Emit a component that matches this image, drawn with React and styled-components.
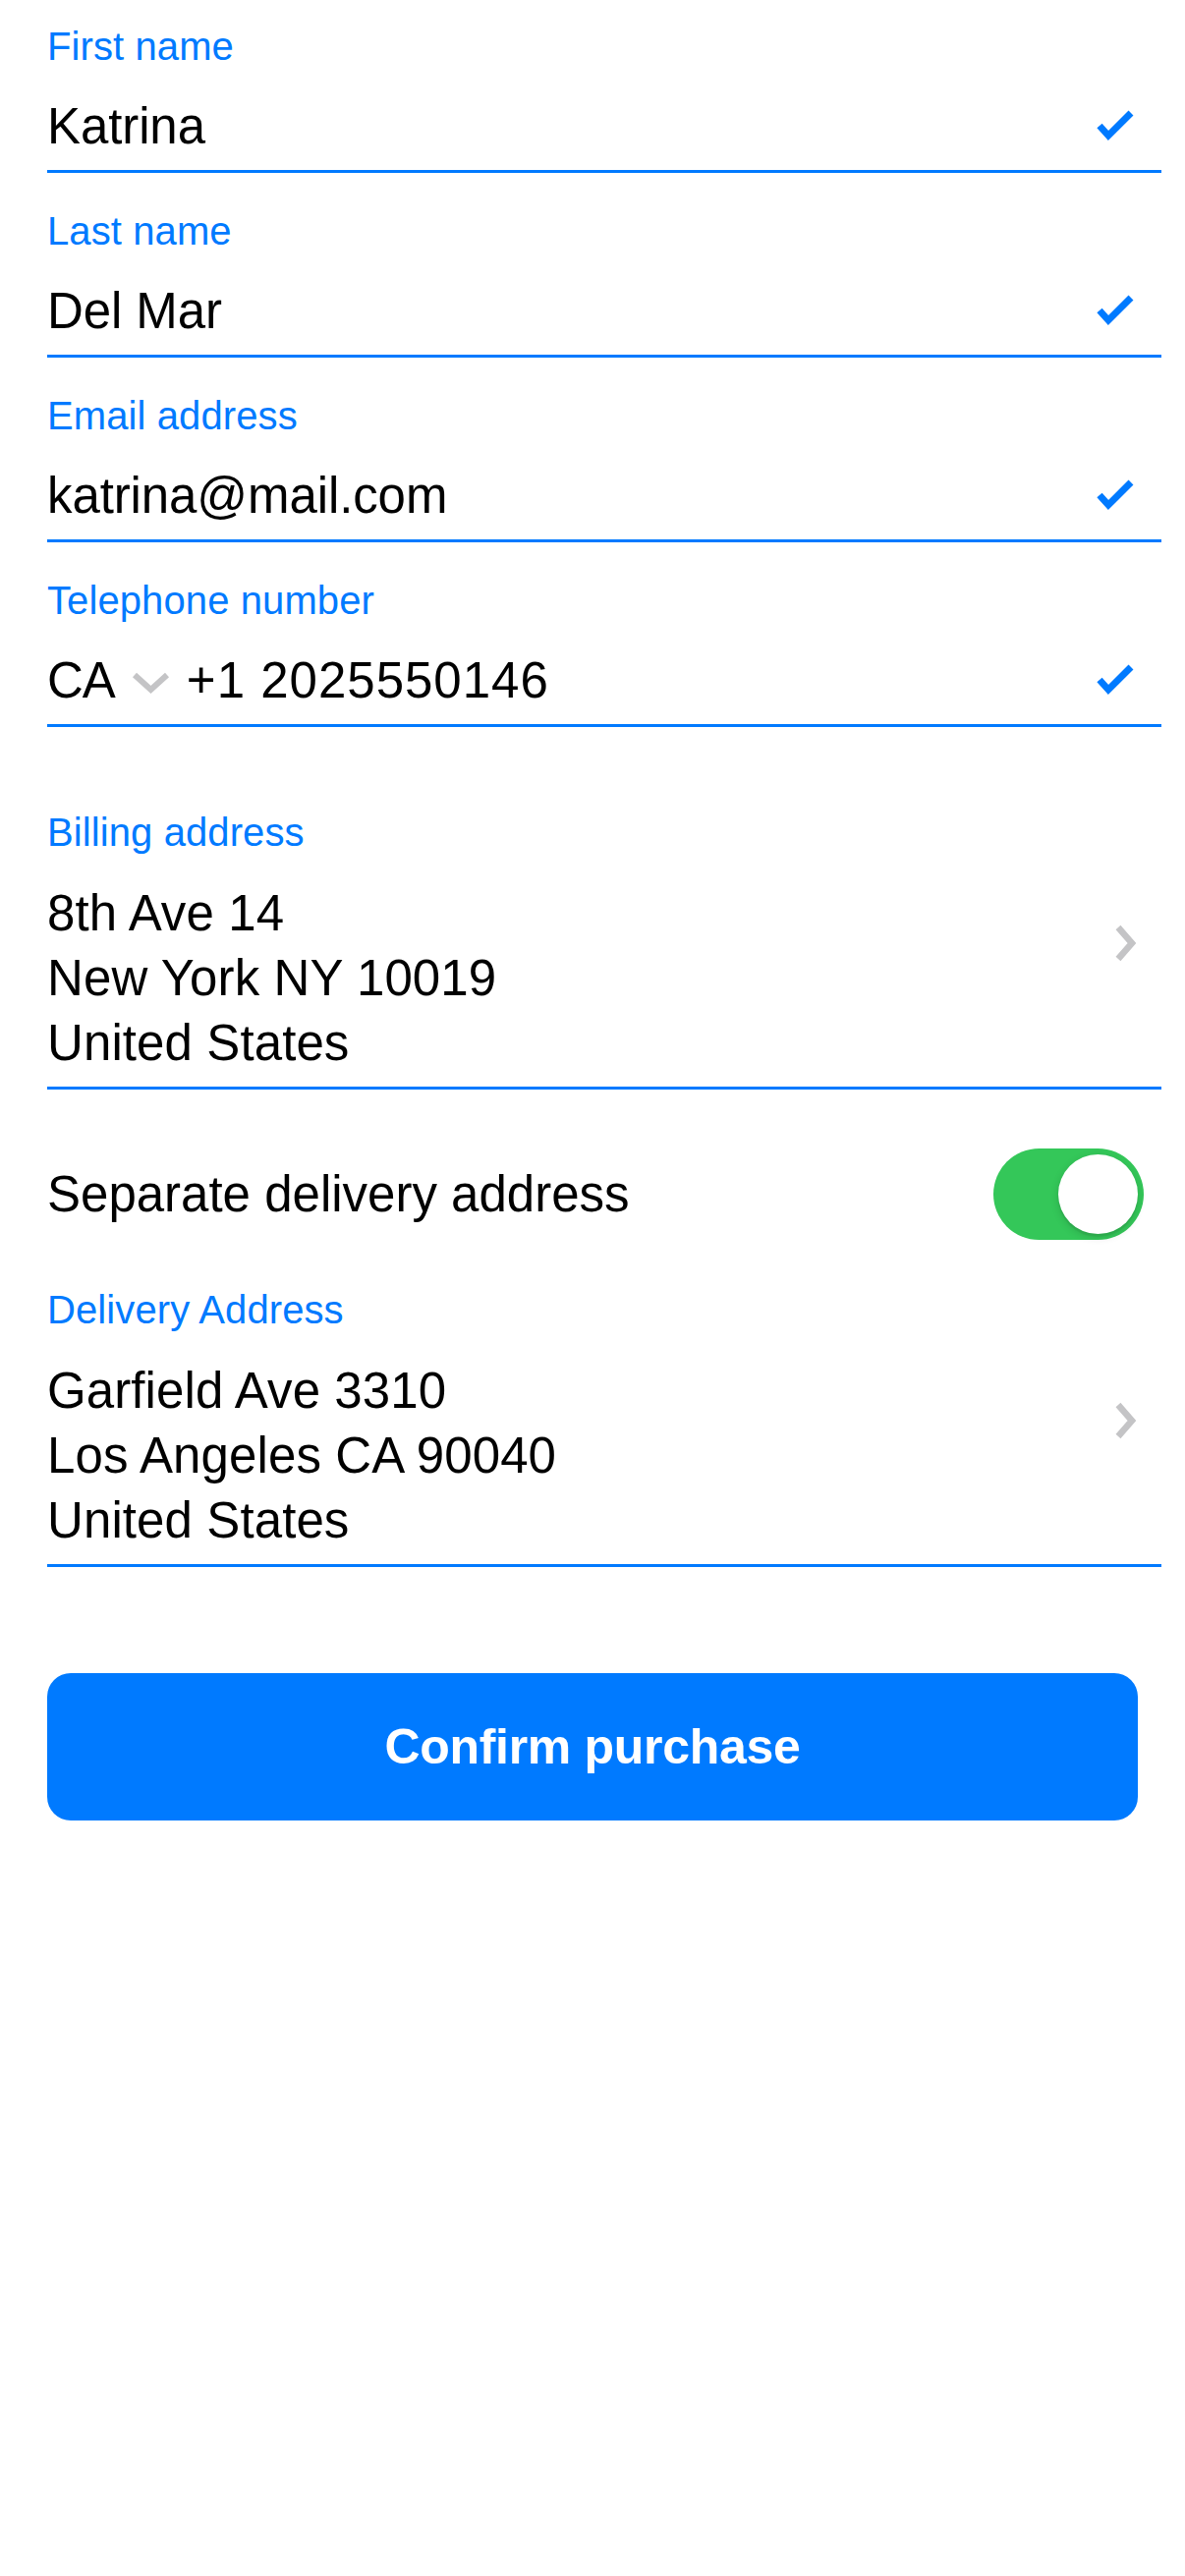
import React from "react";
import styled, { createGlobalStyle } from "styled-components";

const GlobalStyle = createGlobalStyle`
  body {
    margin: 0;
    background: #ffffff;
    font-family: "Liberation Sans", Arial, sans-serif;
    color: #000000;
  }
`;

const Page = styled.div`
  padding: 0 24px 200px 48px;
  background: #ffffff;
`;

const Field = styled.div`
  padding-top: ${(p) => p.$top}px;
  border-bottom: 3px solid #007aff;
`;

const Label = styled.div`
  font-size: 40px;
  line-height: 46px;
  letter-spacing: 0.1px;
  color: #007aff;
`;

const ValueRow = styled.div`
  display: flex;
  align-items: center;
  height: 60px;
  margin-top: 29px;
  margin-bottom: 14px;
  padding-right: 27px;
`;

const Value = styled.div`
  flex: 1;
  font-size: 51px;
  line-height: 60px;
  letter-spacing: ${(p) => (p.$wide ? "1px" : "-0.1px")};
  white-space: nowrap;
`;

const Country = styled.span`
  font-size: 51px;
  line-height: 60px;
  letter-spacing: -1px;
`;

const DownIcon = styled.svg`
  margin: 4px 16px 0 16px;
  flex-shrink: 0;
`;

const AddressRow = styled.div`
  display: flex;
  align-items: flex-start;
  margin-top: 27px;
  margin-bottom: 11px;
  padding-right: 23px;
`;

const AddressLines = styled.div`
  flex: 1;
  font-size: 51px;
  line-height: 66px;
  letter-spacing: 0.1px;
`;

const ChevronIcon = styled.svg`
  margin-top: 43px;
  flex-shrink: 0;
`;

const ToggleRow = styled.div`
  display: flex;
  align-items: center;
  justify-content: space-between;
  margin-top: 60px;
  padding-right: 18px;
`;

const ToggleText = styled.div`
  font-size: 51px;
  line-height: 60px;
  letter-spacing: 0;
`;

const Switch = styled.div`
  position: relative;
  width: 153px;
  height: 93px;
  border-radius: 47px;
  background: ${(p) => (p.$on ? "#34c759" : "#e9e9ea")};
  flex-shrink: 0;
`;

const Knob = styled.span`
  position: absolute;
  top: 6px;
  ${(p) => (p.$on ? "right: 6px;" : "left: 6px;")}
  width: 81px;
  height: 81px;
  border-radius: 50%;
  background: #ffffff;
  box-shadow: 0 3px 8px rgba(0, 0, 0, 0.15), 0 3px 1px rgba(0, 0, 0, 0.06);
`;

const Button = styled.button`
  all: unset;
  box-sizing: border-box;
  display: flex;
  align-items: center;
  justify-content: center;
  width: calc(100% - 24px);
  height: 150px;
  margin-top: 108px;
  border-radius: 24px;
  background: #007aff;
  color: #ffffff;
  font-family: "Liberation Sans", Arial, sans-serif;
  font-size: 50px;
  font-weight: 700;
  letter-spacing: -0.3px;
`;

const Check = () => (
  <svg width="42" height="34" viewBox="0 0 42 34">
    <polyline
      points="6,16 15,26 38,3"
      fill="none"
      stroke="#007aff"
      strokeWidth="7"
      strokeLinejoin="miter"
    />
  </svg>
);

const Chevron = () => (
  <ChevronIcon width="28" height="40" viewBox="0 0 28 40">
    <polyline
      points="7,4 21,20 7,36"
      fill="none"
      stroke="#c4c4c6"
      strokeWidth="6.5"
    />
  </ChevronIcon>
);

const fields = [
  { label: "First name", value: "Katrina" },
  { label: "Last name", value: "Del Mar" },
  { label: "Email address", value: "katrina@mail.com" },
];

export default function App() {
  return (
    <>
      <GlobalStyle />
      <Page>
        {fields.map((f, i) => (
          <Field key={f.label} $top={i === 0 ? 24 : 36}>
            <Label>{f.label}</Label>
            <ValueRow>
              <Value>{f.value}</Value>
              <Check />
            </ValueRow>
          </Field>
        ))}

        <Field $top={36}>
          <Label>Telephone number</Label>
          <ValueRow>
            <Country>CA</Country>
            <DownIcon width="41" height="24" viewBox="0 0 41 24">
              <polyline
                points="4,4 20.5,19 37,4"
                fill="none"
                stroke="#c4c4c6"
                strokeWidth="6"
              />
            </DownIcon>
            <Value $wide>+1 2025550146</Value>
            <Check />
          </ValueRow>
        </Field>

        <Field $top={84}>
          <Label>Billing address</Label>
          <AddressRow>
            <AddressLines>
              <div>8th Ave 14</div>
              <div>New York NY 10019</div>
              <div>United States</div>
            </AddressLines>
            <Chevron />
          </AddressRow>
        </Field>

        <ToggleRow>
          <ToggleText>Separate delivery address</ToggleText>
          <Switch $on>
            <Knob $on />
          </Switch>
        </ToggleRow>

        <Field $top={48}>
          <Label>Delivery Address</Label>
          <AddressRow>
            <AddressLines>
              <div>Garfield Ave 3310</div>
              <div>Los Angeles CA 90040</div>
              <div>United States</div>
            </AddressLines>
            <Chevron />
          </AddressRow>
        </Field>

        <Button type="button">Confirm purchase</Button>
      </Page>
    </>
  );
}
